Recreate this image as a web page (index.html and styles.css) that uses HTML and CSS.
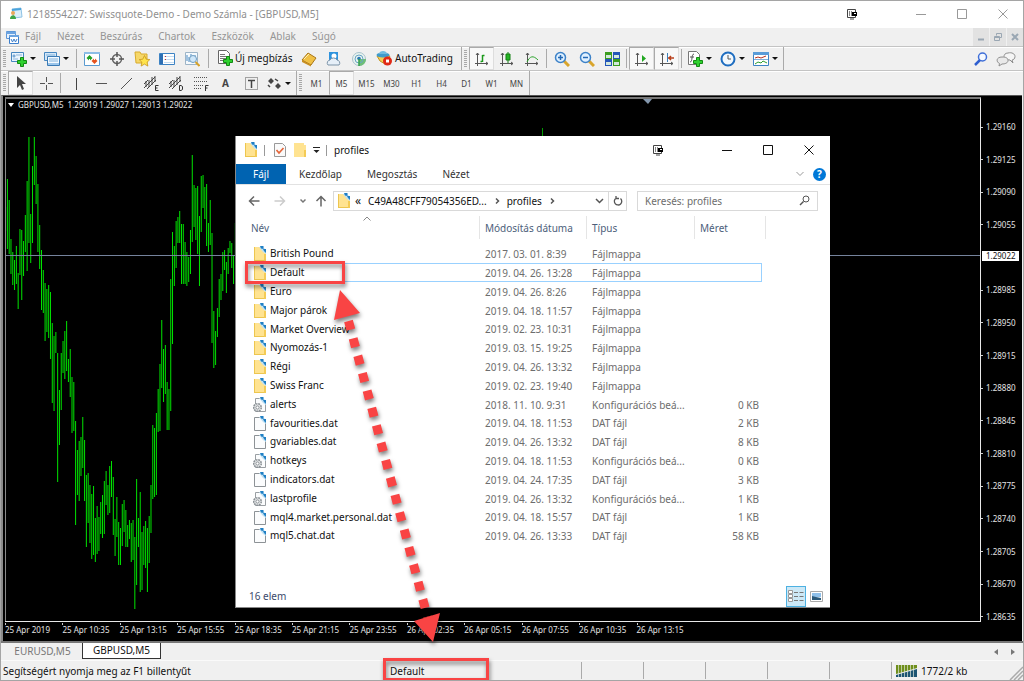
FILE: index.html
```html
<!DOCTYPE html>
<html lang="hu">
<head>
  <meta charset="UTF-8" />
  <title>1218554227: Swissquote-Demo - Demo Számla - [GBPUSD,M5]</title>
  <link rel="stylesheet" href="styles.css">
</head>
<body>
  <svg class="defs" width="0" height="0">
    <symbol id="folder" viewBox="0 0 14 16">
      <path d="M1 1h8l4 4v10H1z" fill="#ffe391" />
      <path d="M1 1h1v14H1zM1 14h12v1H1z" fill="#edc64f" />
      <path d="M11 8h2v7h-2z" fill="#f4cb55" />
      <path d="M6 1h4l3 3v4l-3-2z" fill="#bfe0f3" />
      <path d="M7 0h3.500v3L8 2.500zM10 3h3v4l-2-2z" fill="#1f7fc4" />
    </symbol>
    <symbol id="doc" viewBox="0 0 14 16">
      <path d="M1.500 1.500h8l3 3v10h-11z" fill="#fbfcfd" stroke="#8d9296" />
      <path d="M6 1h4l3 3v4l-3-2z" fill="#bfe0f3" />
      <path d="M7 0h3.500v3L8 2.500zM10 3h3v4l-2-2z" fill="#1f7fc4" />
    </symbol>
    <symbol id="config" viewBox="0 0 14 16">
      <path d="M2.500 1.500h7l3 3v10h-10z" fill="#fbfcfd" stroke="#9a9fa3" />
      <path d="M6 1h4l3 3v4l-3-2z" fill="#bfe0f3" />
      <path d="M7 0h3.500v3L8 2.500zM10 3h3v4l-2-2z" fill="#1f7fc4" />
      <circle cx="4.500" cy="10.500" r="3.800" fill="#e6e8e9" stroke="#8b9196" stroke-width="1.600" stroke-dasharray="1.800 .8" />
      <circle cx="4.500" cy="10.500" r="1.600" fill="#fff" stroke="#8b9196" />
    </symbol>
    <symbol id="plus" viewBox="0 0 10 10">
      <path d="M3.500 .5h3v3h3v3h-3v3h-3v-3h-3v-3h3z" fill="#2fd12f" stroke="#128a12" />
    </symbol>
    <symbol id="axes" viewBox="0 0 16 16">
      <path d="M3.500 2v13M1 12.500h13M2 4l1.500-2L5 4M12 11l2 1.500-2 1.500" fill="none" stroke="#555" />
    </symbol>
    <symbol id="capture" viewBox="0 0 12 12">
      <path d="M1.500 1.500h8v8h-8zM4 11h4" fill="#fff" stroke="#444" />
      <path d="M3 3h1v5H3zM5 3h1v5H5z" fill="#888" />
      <path d="M6 4h5v4H6z" fill="#000" />
      <path d="M8 5h2v1H8z" fill="#fff" />
    </symbol>
  </svg>

  <header class="titlebar">
    <svg class="app-icon" viewBox="0 0 14 14">
      <path d="M3 2l9-1 1 9-8 1z" fill="#dceefa" stroke="#8fc3e6" />
      <path d="M3 2l9-1v2l-9 1z" fill="#4aa3dc" />
      <circle cx="4" cy="6" r="2" fill="#e9a75a" />
      <path d="M1 12c0-5 6-5 6 0z" fill="#3fa648" />
    </svg>
    <span class="title">1218554227: Swissquote-Demo - Demo Számla - [GBPUSD,M5]</span>
    <div class="window-buttons inactive">
      <button class="capture" aria-label="Capture"><svg width="12" height="12"><use href="#capture" /></svg></button>
      <button aria-label="Minimize"><svg width="10" height="10"><path d="M0 5.500h10" /></svg></button>
      <button aria-label="Maximize"><svg width="10" height="10"><path d="M.5 .5h9v9h-9z" /></svg></button>
      <button aria-label="Close"><svg width="10" height="10"><path d="M.5 .5l9 9M9.500 .5l-9 9" /></svg></button>
    </div>
  </header>

  <nav class="menubar">
    <svg class="menu-icon" viewBox="0 0 14 13">
      <path d="M1.500 .5h9v7h-9z" fill="#e7f1fc" stroke="#5d96d6" />
      <path d="M4.500 4.500h9v8h-9z" fill="#fff" stroke="#3c7ecb" />
      <path d="M1 1h10v2H1zM4 4h10v2H4z" fill="#6ba3e0" />
      <path d="M6 8l1.500 3L9 8l1.500 3L12 8" fill="none" stroke="#3c7ecb" />
    </svg>
    <button>Fájl</button>
    <button>Nézet</button>
    <button>Beszúrás</button>
    <button>Chartok</button>
    <button>Eszközök</button>
    <button>Ablak</button>
    <button>Súgó</button>
    <div class="mdi-buttons">
      <button aria-label="Minimize chart"><svg width="8" height="8"><path d="M1 6.500h6" stroke-width="2" /></svg></button>
      <button aria-label="Restore chart"><svg width="8" height="8"><path d="M2.500 2.500v-2h5v4h-2M.5 3.500h5v4h-5zM.5 4.500h5" /></svg></button>
      <button aria-label="Close chart"><svg width="8" height="8"><path d="M1 1l6 6M7 1l-6 6" stroke-width="2" /></svg></button>
    </div>
  </nav>

  <div class="toolbar">
    <div class="group">
      <i class="grip"></i>
      <button class="drop" aria-label="New chart">
        <svg viewBox="0 0 16 16"><path d="M.5 1.500h12v9H.5z" fill="#eaf4fd" stroke="#4787c0" /><path d="M2 4h2v2H2zM5 4h6M2 8h5" fill="#4787c0" stroke="#8bb5dc" /><use href="#plus" x="6" y="6" width="10" height="10" /></svg>
      </button>
      <button class="drop" aria-label="Profiles">
        <svg viewBox="0 0 16 16"><path d="M.5 1.500h12v8H.5z" fill="#d5e8f8" stroke="#4787c0" /><path d="M3.500 5.500h12v9h-12z" fill="#f4faff" stroke="#3b7bb5" /><path d="M5 8h9M5 10h9M2 4h9" stroke="#7fb0db" /><path d="M4 12h11v2H4z" fill="#9cc6eb" /></svg>
      </button>
      <i class="sep"></i>
      <button aria-label="Market watch"><svg viewBox="0 0 16 16"><path d="M.5 1.500h15v13H.5z" fill="#fff" stroke="#5b9bd0" /><path d="M0 1h16v2H0z" fill="#8cbde6" /><path d="M5.500 4l3 3-3 3-3-3z" fill="#23a023" /><path d="M10.500 7l3 3-3 3-3-3z" fill="#e5531f" /><path d="M5 8h1v2H5zM10 7h1v2h-1z" fill="#fff" /></svg></button>
      <button aria-label="Data window"><svg viewBox="0 0 16 16"><circle cx="8" cy="8" r="4.500" fill="none" stroke="#666" stroke-width="1.500" /><path d="M8 1v5M8 10v5M1 8h5M10 8h5" stroke="#555" stroke-width="1.500" /></svg></button>
      <button aria-label="Navigator"><svg viewBox="0 0 16 16"><path d="M1 1h5l1 2h6v9H2z" fill="#f6d768" stroke="#d8ab2c" /><path d="M10.500 4.500l1.700 3.700 3.600.4-2.700 2.600.8 3.900-3.400-2-3.400 2 .8-3.900L5.200 8.600l3.600-.4z" fill="#ffe44d" stroke="#c7961d" stroke-width=".8" /></svg></button>
      <button aria-label="Terminal"><svg viewBox="0 0 16 16"><path d="M.5 2.500h15v11H.5z" fill="#fff" stroke="#3d83c4" /><path d="M1 3h3v10H1z" fill="#2e6fb3" /><path d="M5 5.500h10M5 8.500h10M5 11.500h10" stroke="#c4dcf1" /><path d="M6 5.500h1M6 8.500h1" stroke="#c33" /></svg></button>
      <button aria-label="Strategy tester"><svg viewBox="0 0 16 16"><path d="M1.500 1.500h12v12h-12z" fill="#f6fafd" stroke="#9db4c7" /><path d="M3 10V4M5 11V6M7 9V3M11 7V4" stroke="#4a8bc4" /><circle cx="9" cy="8" r="3.500" fill="#cfe7fa" stroke="#6f9ec2" /><path d="M11.500 11l4 4" stroke="#d7a22a" stroke-width="2" /></svg></button>
      <i class="sep wide"></i>
      <button class="labelled order">
        <svg viewBox="0 0 16 16"><path d="M1.500 .5h8l3 3v10h-11z" fill="#fff" stroke="#666" /><path d="M3 4.500h5M3 6.500h7M3 8.500h7M3 10.500h4" stroke="#777" /><use href="#plus" x="6" y="6" width="10" height="10" /></svg>
        Új megbízás
      </button>
      <button aria-label="MetaEditor"><svg viewBox="0 0 16 16"><path d="M1 9l6-7 8 5-5 7z" fill="#f0c044" stroke="#a8761a" /><path d="M1 9l9 5v1.500L1 11z" fill="#c98f1f" /><path d="M3 8l5-5" stroke="#fff0b5" /></svg></button>
      <button aria-label="MQL5 community"><svg viewBox="0 0 16 16"><path d="M3 1h9v9H3z" fill="#2f93dd" /><circle cx="8" cy="5" r="2.500" fill="#fff" /><path d="M2 14a3 3 0 0 1 2-5 4 4 0 0 1 7 0 3 3 0 0 1 2 5z" fill="#e6eff8" stroke="#7c93a8" /></svg></button>
      <button aria-label="Signals"><svg viewBox="0 0 16 16"><circle cx="8" cy="8" r="6.500" fill="#e8f3f0" stroke="#a9c3cc" /><path d="M8 8h7c0 4-3 7-7 7z" fill="#6fbf7a" /><circle cx="8" cy="8" r="4" fill="none" stroke="#6aa5c4" /><circle cx="8" cy="7.500" r="1.800" fill="#2d79b5" /><path d="M8 8v7" stroke="#36a04a" stroke-width="1.500" /></svg></button>
      <button class="labelled auto">
        <svg viewBox="0 0 16 16"><path d="M1 6h13l-5 8-5-3z" fill="#f3cc54" stroke="#c39422" /><ellipse cx="7" cy="5" rx="6.500" ry="2.500" fill="#3f9bcb" /><path d="M3 4c0-4 8-4 8 0z" fill="#6dbbe0" /><circle cx="11.500" cy="11" r="4.500" fill="#e02a17" /><path d="M10 9.500h3v3h-3z" fill="#fff" /></svg>
        AutoTrading
      </button>
    </div>
    <div class="group">
      <i class="grip"></i>
      <button class="pressed" aria-label="Bar chart"><svg viewBox="0 0 16 16"><use href="#axes" /><path d="M8.500 4v7M8 10.500H6.500M8.500 4.500h2" stroke="#1c9a1c" stroke-width="1.500" /></svg></button>
      <button aria-label="Candlesticks"><svg viewBox="0 0 16 16"><use href="#axes" /><path d="M9 1v11" stroke="#128012" /><path d="M7 3h4v6H7z" fill="#24b424" stroke="#128012" /></svg></button>
      <button aria-label="Line chart"><svg viewBox="0 0 16 16"><use href="#axes" /><path d="M3 11c3-6 6-7 11-2" fill="none" stroke="#2da52d" /></svg></button>
      <i class="sep"></i>
      <button aria-label="Zoom in"><svg viewBox="0 0 16 16"><path d="M10 10l5 5" stroke="#d9a52c" stroke-width="3" /><circle cx="6.500" cy="6.500" r="5" fill="#dff0ff" stroke="#3d82c8" stroke-width="1.500" /><path d="M4 6.500h5M6.500 4v5" stroke="#2469b5" stroke-width="1.500" /></svg></button>
      <button aria-label="Zoom out"><svg viewBox="0 0 16 16"><path d="M10 10l5 5" stroke="#d9a52c" stroke-width="3" /><circle cx="6.500" cy="6.500" r="5" fill="#dff0ff" stroke="#3d82c8" stroke-width="1.500" /><path d="M4 6.500h5" stroke="#2469b5" stroke-width="1.500" /></svg></button>
      <button aria-label="Tile windows"><svg viewBox="0 0 16 16"><path d="M1 1h7v7H1zM9 8h7v7H9z" fill="#3c9d1f" /><path d="M9 1h7v7H9zM1 8h7v7H1z" fill="#2456b8" /><path d="M2 4h5v3H2zM10 4h5v3h-5zM2 11h5v3H2zM10 11h5v3h-5z" fill="#d4e8dc" /></svg></button>
      <i class="sep"></i>
      <button class="pressed" aria-label="Auto scroll"><svg viewBox="0 0 16 16"><use href="#axes" /><path d="M8 4l4 3.500-4 3.500z" fill="#23a823" /></svg></button>
      <button class="pressed" aria-label="Chart shift"><svg viewBox="0 0 16 16"><use href="#axes" /><path d="M8.500 2v9" stroke="#3d7fb8" /><path d="M9 7h6M12 5L10 7l2 2" fill="none" stroke="#b8401c" stroke-width="1.500" /></svg></button>
      <i class="sep"></i>
      <button class="drop" aria-label="Indicators"><svg viewBox="0 0 16 16"><path d="M1.500 .5h8l3 3v10h-11z" fill="#fff" stroke="#777" /><path d="M7 3c-3 0-1 8-4 8M3 6h4" fill="none" stroke="#555" /><use href="#plus" x="6" y="6" width="10" height="10" /></svg></button>
      <button class="drop" aria-label="Periods"><svg viewBox="0 0 16 16"><circle cx="8" cy="8" r="6.500" fill="#f2f8fd" stroke="#1e6dc0" stroke-width="2" /><path d="M8 4v4h3" fill="none" stroke="#555" /></svg></button>
      <button class="drop" aria-label="Templates"><svg viewBox="0 0 16 16"><path d="M.5 1.500h15v13H.5z" fill="#fff" stroke="#3d83c4" /><path d="M0 1h16v3H0z" fill="#5a9cd8" /><path d="M2 7l3-1 3 1 5-2" fill="none" stroke="#b8301c" /><path d="M1 8.500h14" stroke="#7fb0db" /><path d="M2 13l3-2 3 1 2-2 4 2" fill="none" stroke="#2fa02f" /></svg></button>
    </div>
    <div class="tools-right">
      <button aria-label="Search"><svg viewBox="0 0 16 16"><circle cx="9.500" cy="6" r="4" fill="#f5f9ff" stroke="#3f6fd8" stroke-width="1.500" /><path d="M7 9l-5 5" stroke="#2f5fd0" stroke-width="2.500" /></svg></button>
      <button class="chat" aria-label="Chat"><svg viewBox="0 0 20 16"><path d="M12 2c4-1 7 1 7 3.500S17 9 16 9l1 3-3-3c-4 0-6-2-6-3.500S9 2 12 2z" fill="#f5f5f5" stroke="#8f8f8f" /><path d="M6 6c4 0 6 1 6 3.500S9 13 6 13l-3 2 .5-2.500C0 11 0 6 6 6z" fill="#e9e9e9" stroke="#8f8f8f" /></svg></button>
    </div>
  </div>

  <div class="toolbar drawing">
    <div class="group">
      <i class="grip"></i>
      <button class="pressed" aria-label="Cursor"><svg viewBox="0 0 16 16"><path d="M4 1v12l3-3 2 5 2-1-2-5h4z" fill="#444" /></svg></button>
      <button aria-label="Crosshair"><svg viewBox="0 0 16 16"><path d="M8.500 2v5M8.500 10v5M2 8.500h5M10 8.500h5" stroke="#555" /></svg></button>
      <i class="sep"></i>
      <button aria-label="Vertical line"><svg viewBox="0 0 16 16"><path d="M8.500 3v12" stroke="#444" /></svg></button>
      <button aria-label="Horizontal line"><svg viewBox="0 0 16 16"><path d="M3 8.500h11" stroke="#555" /></svg></button>
      <button aria-label="Trendline"><svg viewBox="0 0 16 16"><path d="M3 14L14 3" stroke="#555" /></svg></button>
      <button aria-label="Equidistant channel"><svg viewBox="0 0 16 16"><path d="M1 13L12 2M4 14l9-9M1 9l4-4M3 6v6M6 5v7M9 2v8M12 1v6" stroke="#444" /><path d="M15.500 10.500h-3v5h3M12.500 13h2" fill="none" stroke="#333" /></svg></button>
      <button aria-label="Deviation channel"><svg viewBox="0 0 16 16"><path d="M1 13L12 2M4 14l9-9M1 9l4-4M3 6v6M6 5v7M9 2v8M12 1v6" stroke="#444" /><path d="M11.500 10.500h1.500l1.500 1v3l-1.500 1h-1.500z" fill="none" stroke="#333" /></svg></button>
      <button aria-label="Fibonacci retracement"><svg viewBox="0 0 16 16"><path d="M1 2.500h13M1 6.500h13M1 10.500h9M1 13.500h8" stroke="#555" stroke-dasharray="1 1" /><path d="M12.500 16v-5.500h3M12.500 13h2" fill="none" stroke="#333" /></svg></button>
      <button class="letter">A</button>
      <button aria-label="Text label"><svg viewBox="0 0 16 16"><path d="M2.500 2.500h12v12h-12z" fill="none" stroke="#555" stroke-dasharray="1 1" /><path d="M5 5.500h7M8.500 5v8" stroke="#444" stroke-width="1.500" /></svg></button>
      <button class="drop" aria-label="Arrows"><svg viewBox="0 0 16 16"><path d="M5 3l3 3-3 3-3-3zM12 8l3 3-3 3-3-3z" fill="#444" /><path d="M2 10l2 2M9 4l3 2" stroke="#444" stroke-width="1.500" /></svg></button>
    </div>
    <div class="group periods">
      <i class="grip"></i>
      <button>M1</button>
      <button class="pressed">M5</button>
      <button>M15</button>
      <button>M30</button>
      <button>H1</button>
      <button>H4</button>
      <button>D1</button>
      <button>W1</button>
      <button>MN</button>
    </div>
  </div>

  <main class="chart">
    <div class="plot">
      <svg class="bars" viewBox="0 0 975 522" preserveAspectRatio="none">
        <path id="bars" fill="none" stroke="#00e400" />
        <path d="M537.500 29v40" stroke="#009a00" />
        <path d="M0 156.500h975" stroke="#75839c" />
        <path d="M.5 0v522" stroke="#8a8a8a" />
        <path d="M638 0h9l-4 5z" fill="#8497ad" />
      </svg>
      <div class="symbol"><span class="caret"></span><span>GBPUSD,M5</span><span>1.29019 1.29027 1.29013 1.29022</span></div>
    </div>
    <div class="prices">
      <span>1.29160</span><span>1.29125</span><span>1.29090</span><span>1.29055</span><span class="blank"></span>
      <span>1.28985</span><span>1.28950</span><span>1.28915</span><span>1.28880</span><span>1.28845</span><span>1.28810</span>
      <span>1.28775</span><span>1.28740</span><span>1.28705</span><span>1.28670</span><span>1.28635</span>
      <b class="current">1.29022</b>
    </div>
    <div class="times">
      <span>25 Apr 2019</span><span>25 Apr 10:35</span><span>25 Apr 13:15</span><span>25 Apr 15:55</span>
      <span>25 Apr 18:35</span><span>25 Apr 21:15</span><span>25 Apr 23:55</span><span>26 Apr 02:35</span>
      <span>26 Apr 05:15</span><span>26 Apr 07:55</span><span>26 Apr 10:35</span><span>26 Apr 13:15</span>
    </div>
  </main>

  <div class="tabs">
    <button>EURUSD,M5</button>
    <button class="active">GBPUSD,M5</button>
    <div class="tab-scroll">
      <button aria-label="Scroll left"><svg width="4" height="6"><path d="M4 0v6L0 3z" /></svg></button>
      <button aria-label="Scroll right"><svg width="4" height="6"><path d="M0 0v6l4-3z" /></svg></button>
    </div>
  </div>

  <footer class="statusbar">
    <span class="help">Segítségért nyomja meg az F1 billentyűt</span>
    <span class="profile">Default</span>
    <span class="cell"></span>
    <span class="cell"></span>
    <span class="cell"></span>
    <span class="cell"></span>
    <span class="cell"></span>
    <span class="traffic">
      <svg width="21" height="12">
        <path d="M0 0h21v3L0 9z" fill="#6f8f1c" />
        <path d="M0 10l21-6v8H0z" fill="#1d5573" />
        <path d="M2.500 0v12M5.500 0v12M8.500 0v12M11.500 0v12M14.500 0v12M17.500 0v12" stroke="#dfe6d8" stroke-width=".7" />
      </svg>
      1772/2 kb
    </span>
    <svg class="resize" width="14" height="14"><path d="M1 14L14 1M5 14l9-9M9 14l5-5" stroke="#aaa" stroke-width="1.500" /></svg>
  </footer>

  <section class="explorer">
    <header class="explorer-title">
      <svg class="file-icon"><use href="#folder" /></svg>
      <i class="bar"></i>
      <svg class="file-icon check" viewBox="0 0 14 16"><path d="M1.500 1.500h8l3 3v10h-11z" fill="#fafafa" stroke="#999" /><path d="M3.500 8l2.500 3 4.500-5" fill="none" stroke="#e4663a" stroke-width="1.700" /></svg>
      <svg class="file-icon" viewBox="0 0 14 16"><path d="M1 1h10v2h2v12H1z" fill="#ffe391" /><path d="M11 8h2v7h-2z" fill="#f4cb55" /></svg>
      <svg class="quick" width="7" height="7"><path d="M0 .5h7" stroke="#222" /><path d="M.5 3h6l-3 3z" fill="#222" /></svg>
      <i class="bar"></i>
      <span>profiles</span>
      <div class="window-buttons">
        <button class="capture" aria-label="Capture"><svg width="12" height="12"><use href="#capture" /></svg></button>
        <button aria-label="Minimize"><svg width="10" height="10"><path d="M0 5.500h10" /></svg></button>
        <button aria-label="Maximize"><svg width="10" height="10"><path d="M.5 .5h9v9h-9z" /></svg></button>
        <button aria-label="Close"><svg width="10" height="10"><path d="M.5 .5l9 9M9.500 .5l-9 9" /></svg></button>
      </div>
    </header>
    <nav class="ribbon">
      <button class="file">Fájl</button>
      <button>Kezdőlap</button>
      <button>Megosztás</button>
      <button>Nézet</button>
      <div class="ribbon-right">
        <svg width="8" height="6"><path d="M.5 1L4 4.500 7.500 1" fill="none" stroke="#999" /></svg>
        <button class="question" aria-label="Súgó">?</button>
      </div>
    </nav>
    <div class="address-row">
      <button aria-label="Back"><svg width="12" height="12"><path d="M11.500 6H1.500M6 1.500L1.500 6 6 10.500" stroke="#666" stroke-width="1.500" /></svg></button>
      <button aria-label="Forward"><svg width="12" height="12"><path d="M.5 6h10M6 1.500L10.500 6 6 10.500" stroke="#ccc" stroke-width="1.500" /></svg></button>
      <button class="recent" aria-label="Recent"><svg width="6" height="6"><path d="M.5 1.500L3 4l2.500-2.500" stroke="#777" stroke-width="1.500" /></svg></button>
      <button class="up" aria-label="Up"><svg width="12" height="12"><path d="M6 11.500V1.500M1.500 6L6 1.500 10.500 6" stroke="#666" stroke-width="1.500" /></svg></button>
      <div class="address">
        <svg class="file-icon"><use href="#folder" /></svg>
        <span class="chevrons">«</span>
        <a href="#">C49A48CFF79054356ED...</a>
        <svg width="5" height="8"><path d="M1 1.500L3.500 4 1 6.500" stroke="#555" stroke-width="1.500" /></svg>
        <a href="#">profiles</a>
        <svg width="5" height="8"><path d="M1 1.500L3.500 4 1 6.500" stroke="#555" stroke-width="1.500" /></svg>
        <button class="history" aria-label="History"><svg width="9" height="6"><path d="M1 1l3.500 3.500L8 1" stroke="#555" stroke-width="1.500" /></svg></button>
        <button class="refresh" aria-label="Refresh"><svg width="10" height="10"><path d="M7.500 2.500A3.700 3.700 0 1 1 3 2.200M3 0v2.500h3" stroke="#555" stroke-width="1.300" /></svg></button>
      </div>
      <div class="search">
        <input type="text" placeholder="Keresés: profiles" aria-label="Keresés: profiles" />
        <svg width="11" height="11"><circle cx="7" cy="4" r="3" fill="none" stroke="#555" /><path d="M4.500 6.500L1 10" stroke="#555" stroke-width="1.500" /></svg>
      </div>
    </div>

    <table class="files">
      <colgroup><col class="c-name"><col class="c-date"><col class="c-type"><col class="c-size"><col class="c-rest"></colgroup>
      <thead>
        <tr><th>Név<svg class="sort" width="8" height="5"><path d="M.5 4.500L4 1l3.500 3.500" fill="none" stroke="#888" /></svg></th><th>Módosítás dátuma</th><th>Típus</th><th colspan="2">Méret</th></tr>
      </thead>
      <tbody>
        <tr><td><svg class="file-icon"><use href="#folder" /></svg>British Pound</td><td>2017. 03. 01. 8:39</td><td>Fájlmappa</td><td></td></tr>
        <tr class="focused"><td><svg class="file-icon"><use href="#folder" /></svg>Default</td><td>2019. 04. 26. 13:28</td><td>Fájlmappa</td><td></td></tr>
        <tr><td><svg class="file-icon"><use href="#folder" /></svg>Euro</td><td>2019. 04. 26. 8:26</td><td>Fájlmappa</td><td></td></tr>
        <tr><td><svg class="file-icon"><use href="#folder" /></svg>Major párok</td><td>2019. 04. 18. 11:57</td><td>Fájlmappa</td><td></td></tr>
        <tr><td><svg class="file-icon"><use href="#folder" /></svg>Market Overview</td><td>2019. 02. 23. 10:31</td><td>Fájlmappa</td><td></td></tr>
        <tr><td><svg class="file-icon"><use href="#folder" /></svg>Nyomozás-1</td><td>2019. 03. 15. 19:25</td><td>Fájlmappa</td><td></td></tr>
        <tr><td><svg class="file-icon"><use href="#folder" /></svg>Régi</td><td>2019. 04. 26. 13:32</td><td>Fájlmappa</td><td></td></tr>
        <tr><td><svg class="file-icon"><use href="#folder" /></svg>Swiss Franc</td><td>2019. 02. 23. 19:40</td><td>Fájlmappa</td><td></td></tr>
        <tr><td><svg class="file-icon"><use href="#config" /></svg>alerts</td><td>2018. 11. 10. 9:31</td><td>Konfigurációs beá...</td><td>0 KB</td></tr>
        <tr><td><svg class="file-icon"><use href="#doc" /></svg>favourities.dat</td><td>2019. 04. 18. 11:53</td><td>DAT fájl</td><td>2 KB</td></tr>
        <tr><td><svg class="file-icon"><use href="#doc" /></svg>gvariables.dat</td><td>2019. 04. 26. 13:32</td><td>DAT fájl</td><td>8 KB</td></tr>
        <tr><td><svg class="file-icon"><use href="#config" /></svg>hotkeys</td><td>2019. 04. 18. 11:53</td><td>Konfigurációs beá...</td><td>0 KB</td></tr>
        <tr><td><svg class="file-icon"><use href="#doc" /></svg>indicators.dat</td><td>2019. 04. 24. 17:35</td><td>DAT fájl</td><td>3 KB</td></tr>
        <tr><td><svg class="file-icon"><use href="#config" /></svg>lastprofile</td><td>2019. 04. 26. 13:32</td><td>Konfigurációs beá...</td><td>1 KB</td></tr>
        <tr><td><svg class="file-icon"><use href="#doc" /></svg>mql4.market.personal.dat</td><td>2019. 04. 18. 15:57</td><td>DAT fájl</td><td>1 KB</td></tr>
        <tr><td><svg class="file-icon"><use href="#doc" /></svg>mql5.chat.dat</td><td>2019. 04. 26. 13:33</td><td>DAT fájl</td><td>58 KB</td></tr>
      </tbody>
    </table>

    <footer class="explorer-status">
      <span>16 elem</span>
      <div class="views">
        <button class="on" aria-label="Details"><svg width="16" height="14"><path d="M.5 1.500h4v3h-4zM.5 5.500h4v3h-4zM.5 9.500h4v3h-4z" fill="#fff" stroke="#999" /><path d="M6 3.500h4M6 7.500h4M6 11.500h4M11.500 3.500h4M11.500 7.500h4M11.500 11.500h4" stroke="#777" /></svg></button>
        <button aria-label="Thumbnails"><svg width="13" height="11"><path d="M.5 .5h12v10H.5z" fill="#fff" stroke="#aaa" /><path d="M2 2h9v4H2z" fill="#8fc0ea" /><path d="M2 5l4 1 5 1v2H2z" fill="#2c5a7a" /></svg></button>
      </div>
    </footer>
  </section>

  <svg class="callout" width="256" height="426" viewBox="240 255 256 426">
    <g fill="none" stroke="#f94444" stroke-width="3">
      <path d="M247.500 262.500h97v20h-97zM385.500 659.500h103v20h-103z" />
      <path d="M349.500 321L428.500 617" stroke-width="9" stroke-dasharray="9 9" />
    </g>
    <path d="M341 290l20 23-26 7zM415 621l26-8-7 29z" fill="#f94444" />
  </svg>

  <script>
    // high/low of every bar, in plot pixels from the top
    const bars = [
      [108,132],[80,150],[101,155],[140,175],[153,186],[161,191],[147,185],[174,210],[130,176],[131,201],
      [142,177],[116,153],[82,172],[38,144],[115,164],[67,144],[38,86],[57,105],[85,153],[126,170],
      [151,211],[171,214],[184,242],[190,233],[186,239],[193,260],[224,304],[237,312],[233,254],[254,383],
      [291,346],[254,311],[242,274],[232,280],[222,272],[260,283],[250,298],[278,334],[283,332],[322,426],
      [351,396],[342,402],[338,377],[318,369],[341,402],[376,448],[374,424],[386,444],[395,460],[387,456],
      [419,463],[407,455],[418,452],[403,435],[396,439],[382,435],[372,406],[386,416],[367,414],[362,398],
      [378,436],[420,457],[398,438],[423,466],[429,466],[405,447],[401,433],[411,448],[426,448],[421,440],
      [424,463],[421,461],[438,510],[380,486],[419,448],[393,493],[433,491],[427,466],[422,469],[429,493],
      [417,464],[386,434],[326,400],[329,398],[314,396],[290,333],[265,332],[221,289],[250,303],[246,295],
      [283,331],[290,331],[180,312],[133,245],[147,187],[122,169],[118,144],[112,144],[125,185],[125,185],
      [143,185],[153,187],[158,183],[131,175],[56,143],[86,128],[89,141],[87,155],[117,187],[77,133],
      [76,109],[88,120],[85,147],[124,153],[101,146],[134,244],[212,269],[232,266],[209,238],[180,218],
      [175,201],[153,192],[151,171],[163,194],[149,175],[142,154],[144,169],[156,185],[124,156]
    ];
    const step = 1.795;
    document.getElementById('bars').setAttribute('d',
      bars.map(([high, low], i) => `M${(0.6 + i * step).toFixed(2)} ${high}V${low}`).join(''));
  </script>
</body>
</html>
```
FILE: styles.css
```css
* {
  box-sizing: border-box;
}
body {
  margin: 0;
  height: 100vh;
  display: flex;
  flex-direction: column;
  position: relative;
  overflow: hidden;
  border: 1px solid #a5a5a5;
  background: #f0f0f0;
  color: #111;
  font-family: "Noto Sans", "Open Sans", sans-serif;
  font-size: 10px;
}
button {
  font: inherit;
  color: inherit;
  background: none;
  border: 0;
  padding: 0;
  display: flex;
  align-items: center;
  justify-content: center;
}
svg {
  flex: none;
}
.defs {
  position: absolute;
}

/* title and menu */
.titlebar {
  display: flex;
  align-items: center;
  height: 27px;
  background: #fff;
  color: #8f8f8f;
  padding: 0 0 2px 8px;
}
.app-icon {
  width: 14px;
  height: 14px;
  margin-right: 4px;
}
.window-buttons {
  display: flex;
  align-self: stretch;
  margin-left: auto;
}
.window-buttons button {
  width: 41px;
}
.window-buttons .capture {
  width: 12px;
  margin-right: 42px;
}
.window-buttons path {
  fill: none;
  stroke: #111;
}
.inactive button:not(.capture) path {
  stroke: #999;
}
.menubar {
  display: flex;
  height: 18px;
  color: #959595;
  padding-left: 4px;
}
.menu-icon {
  width: 14px;
  height: 13px;
  align-self: center;
  margin-right: 6px;
}
.menubar > button {
  margin-right: 16px;
  padding-bottom: 2px;
}
.mdi-buttons {
  display: flex;
  gap: 1px;
  margin-left: auto;
}
.mdi-buttons button {
  width: 16px;
  background: #e2e2e2;
}
.mdi-buttons path {
  fill: none;
  stroke: #9aa7b3;
}

/* toolbars */
.toolbar {
  display: flex;
  height: 24px;
  border-top: 1px solid #c4c4c4;
  box-shadow: inset 0 1px #fff;
}
.toolbar.drawing {
  height: 25px;
}
.group {
  display: flex;
  border-right: 1px solid #aaa;
}
.grip {
  width: 3px;
  margin: 3px 2px;
  background: repeating-linear-gradient(#a8a8a8 0 1px, #f0f0f0 1px 2px);
}
.sep {
  width: 1px;
  margin: 2px;
  background: #aaa;
}
.sep.wide {
  margin: 2px 4px;
}
.toolbar button {
  width: 25px;
}
.toolbar button svg {
  width: 16px;
  height: 16px;
}
.toolbar .drop {
  width: 33px;
  padding-left: 3px;
  gap: 3px;
  justify-content: flex-start;
}
.drop::after {
  content: "";
  border: 3px solid transparent;
  border-top-color: #111;
  border-bottom: 0;
}
.toolbar .labelled {
  padding: 0 0 1px 4px;
  gap: 2px;
  justify-content: flex-start;
  white-space: nowrap;
}
.toolbar .order {
  width: 83px;
}
.toolbar .auto {
  width: 90px;
  padding-left: 5px;
  gap: 3px;
}
.toolbar .pressed {
  background: #f8f8f8;
  border: 1px solid #ddd;
  border-top-color: #aaa;
  border-left-color: #aaa;
}
.toolbar .letter {
  color: #444;
  font-weight: bold;
}
.periods {
  font-size: 8px;
  color: #444;
}
.tools-right {
  display: flex;
  margin-left: auto;
  padding-right: 5px;
}
.toolbar .chat svg {
  width: 20px;
}

/* chart */
.chart {
  flex: 1;
  display: grid;
  grid-template-columns: 1fr 41px;
  grid-template-rows: 1fr 19px;
  min-height: 0;
  background: #000;
  color: #e4e4e4;
  font-size: 8px;
  line-height: 10px;
  padding: 1px 0 0 2px;
  border-left: 2px solid #8a8a8a;
  border-top: 1px solid #555;
  margin-right: 1px;
}
.plot {
  display: flex;
  position: relative;
  min-height: 0;
  border-top: 2px solid #777;
  border-right: 1px solid #e8e8e8;
  border-bottom: 1px solid #e8e8e8;
}
.bars {
  width: 100%;
  height: 100%;
}
.symbol {
  position: absolute;
  left: 3px;
  top: 1px;
  display: flex;
  align-items: center;
  gap: 4px;
}
.caret {
  border: 3px solid transparent;
  border-top: 4px solid #fff;
  border-bottom: 0;
}
.prices {
  position: relative;
  display: flex;
  flex-direction: column;
  justify-content: space-between;
  padding-top: 25px;
}
.prices span {
  display: flex;
  align-items: center;
  gap: 3px;
  height: 10px;
}
.prices span::before {
  content: "";
  width: 2px;
  height: 1px;
  background: #ccc;
}
.prices .blank::before {
  display: none;
}
.current {
  position: absolute;
  top: 154px;
  left: 1px;
  right: 3px;
  padding-left: 4px;
  background: #fff;
  color: #111;
  font-weight: normal;
}
.times {
  display: grid;
  grid-template-columns: repeat(17, 1fr);
  white-space: nowrap;
}
.times span {
  padding-top: 1px;
}
.times span::before {
  content: "";
  display: block;
  width: 1px;
  height: 2px;
  background: #ccc;
}

/* tabs and status bar */
.tabs {
  display: flex;
  height: 19px;
  border-top: 2px solid #777;
  padding-left: 2px;
  color: #777;
}
.tabs > button {
  width: 79px;
  height: 16px;
  padding-bottom: 1px;
}
.tabs .active {
  background: #fff;
  color: #111;
  border: 1px solid #333;
  border-top: 0;
}
.tab-scroll {
  display: flex;
  gap: 13px;
  margin-left: auto;
  padding-right: 8px;
  fill: #777;
}
.statusbar {
  display: flex;
  height: 20px;
  border-top: 1px solid #fafafa;
  line-height: 20px;
  padding-left: 2px;
}
.help {
  flex: 1;
}
.profile {
  width: 191px;
}
.cell,
.traffic {
  border-left: 1px solid #aaa;
  margin: 1px 0;
}
.cell {
  width: 62px;
}
.traffic {
  display: flex;
  align-items: center;
  gap: 4px;
  width: 118px;
  padding-left: 4px;
}
.resize {
  align-self: flex-end;
}

/* explorer window */
.explorer {
  position: absolute;
  left: 234px;
  top: 135px;
  width: 595px;
  height: 472px;
  display: flex;
  flex-direction: column;
  background: #fff;
  border-left: 1px solid #888;
  border-bottom: 1px solid #888;
}
.file-icon {
  width: 14px;
  height: 16px;
}
.explorer-title {
  display: flex;
  align-items: center;
  height: 28px;
  padding: 0 1px 0 8px;
}
.explorer-title .bar {
  width: 1px;
  height: 11px;
  margin: 0 7px 0 6px;
  background: #999;
}
.explorer-title .check {
  margin: 0 6px 0 1px;
}
.explorer-title .quick {
  margin-left: 6px;
}
.ribbon {
  display: flex;
  height: 21px;
  border-bottom: 1px solid #e2e2e2;
  color: #333;
}
.ribbon button {
  padding: 0 12px 0 13px;
}
.ribbon .file {
  width: 50px;
  padding: 0;
  background: #0063b1;
  color: #fff;
}
.ribbon-right {
  display: flex;
  align-items: center;
  gap: 9px;
  margin-left: auto;
  padding-right: 4px;
}
.ribbon .question {
  width: 13px;
  height: 13px;
  padding: 0;
  border-radius: 50%;
  background: #0078d7;
  color: #fff;
  font-weight: bold;
}
.address-row {
  display: flex;
  align-items: center;
  height: 31px;
  padding: 0 12px 0 12px;
}
.address-row svg > path {
  fill: none;
}
.address-row > button {
  margin-right: 14px;
}
.address-row .recent {
  margin-right: 9px;
}
.address-row .up {
  margin-right: 6px;
}
.address {
  flex: 1;
  display: flex;
  align-items: center;
  height: 20px;
  border: 1px solid #d9d9d9;
  padding-left: 3px;
}
.address a {
  color: #111;
  text-decoration: none;
  margin: 0 8px 0 7px;
}
.chevrons {
  margin-left: 4px;
  font-size: 12px;
}
.history {
  margin-left: auto;
  margin-right: 4px;
}
.address .refresh {
  width: 18px;
  height: 18px;
  border-left: 1px solid #d9d9d9;
}
.search {
  display: flex;
  align-items: center;
  width: 181px;
  height: 20px;
  margin-left: 10px;
  padding: 0 7px;
  border: 1px solid #d9d9d9;
}
.search input {
  flex: 1;
  min-width: 0;
  border: 0;
  padding: 0;
  font: inherit;
  outline: 0;
}
.search input::placeholder {
  color: #6d6d6d;
}
.files {
  table-layout: fixed;
  width: 520px;
  margin-left: 10px;
  border-spacing: 0;
  white-space: nowrap;
}
.c-name {
  width: 234px;
}
.c-date {
  width: 107px;
}
.c-type {
  width: 108px;
}
.c-size {
  width: 67px;
}
.c-rest {
  width: 4px;
}
.files th {
  height: 23px;
  padding: 0 5px;
  border-right: 1px solid #e5e5e5;
  color: #4c607a;
  font-weight: normal;
  text-align: left;
}
.files th:first-child {
  position: relative;
}
.sort {
  position: absolute;
  left: 50%;
  top: 0;
}
.files tbody::before {
  content: "";
  display: block;
  height: 5px;
}
.files tbody tr {
  height: 19px;
}
.files tbody tr:nth-child(5n) {
  height: 18px;
}
.files td {
  padding: 0 5px;
  line-height: 16px;
  color: #6d6d6d;
  border: 0 solid #99d1ff;
}
.files td:first-child {
  padding-left: 7px;
  color: #111;
}
.files td:last-child {
  padding: 0 3px;
  text-align: right;
}
.files td .file-icon {
  vertical-align: middle;
  margin-right: 3px;
}
.files .focused td {
  border-width: 1px 0;
}
.files .focused td:last-child {
  border-right-width: 1px;
}
.explorer-status {
  display: flex;
  align-items: center;
  height: 22px;
  margin-top: auto;
  padding: 0 4px 0 13px;
  color: #3b4a6b;
}
.views {
  display: flex;
  margin-left: auto;
}
.views button {
  width: 20px;
  height: 21px;
}
.views .on {
  background: #cce8f6;
  border: 1px solid #4db1e2;
}

/* red markers over everything */
.callout {
  position: absolute;
  left: 238px;
  top: 254px;
  filter: drop-shadow(1px 3px 2px rgba(0, 0, 0, .5));
}
```
